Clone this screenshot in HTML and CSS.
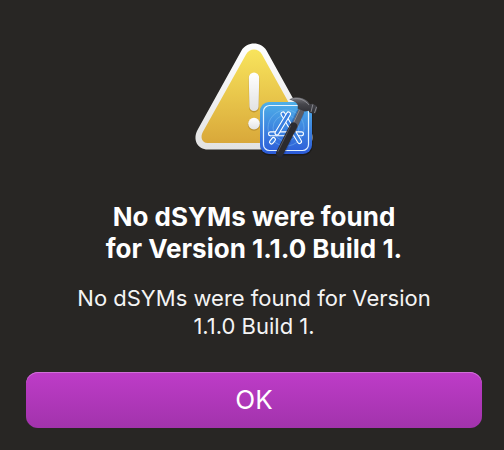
FILE: index.html
```html
<!DOCTYPE html>
<html lang="en">
<head>
    <meta charset="UTF-8">
    <meta name="viewport" content="width=device-width, initial-scale=1.0">
    <title>No dSYMs were found</title>
    <link rel="stylesheet" href="styles.css">
</head>
<body>

    <main class="alert" role="alertdialog" aria-labelledby="alertTitle" aria-describedby="alertText">
        <svg class="alert-icon" viewBox="190 36 128 128" aria-hidden="true">
            <defs>
                <linearGradient id="frame" x1="0" y1="0" x2="0" y2="1">
                    <stop offset="0" stop-color="#ffffff"/>
                    <stop offset="1" stop-color="#e2e2e2"/>
                </linearGradient>
                <linearGradient id="yellow" x1="0" y1="0" x2="0" y2="1">
                    <stop offset="0" stop-color="#f8e45c"/>
                    <stop offset="1" stop-color="#d9a83a"/>
                </linearGradient>
                <linearGradient id="blue" x1="0" y1="0" x2="0" y2="1">
                    <stop offset="0" stop-color="#4fb0e8"/>
                    <stop offset="1" stop-color="#2c5bd8"/>
                </linearGradient>
                <linearGradient id="metal" x1="0" y1="0" x2="0" y2="1">
                    <stop offset="0" stop-color="#77777d"/>
                    <stop offset="0.4" stop-color="#46464c"/>
                    <stop offset="1" stop-color="#2c2c31"/>
                </linearGradient>
            </defs>

            <!-- warning triangle -->
            <path fill="url(#frame)" d="M241.500 50.500C247 41.200 261 41.200 266.500 50.500L310.500 130C316 140 310 149.500 300 149.500H208C197 149.500 192.500 139 197.500 130Z"/>
            <path fill="url(#yellow)" d="M246 54.500C249.500 47.800 258.500 47.800 262 54.500L305 132C308 138 305 143 300 143H207.500C202 143 200 137 202.800 132Z"/>
            <path fill="#a87f25" opacity="0.6" d="M248.500 78.500a5.500 5.500 0 0 1 11 0l-.6 29a4.900 4.900 0 0 1-9.800 0Z"/>
            <circle cx="254" cy="124.600" r="6.200" fill="#a87f25" opacity="0.6"/>
            <path fill="url(#frame)" d="M248.800 77.800a5.200 5.200 0 0 1 10.400 0l-.6 28.600a4.600 4.600 0 0 1-9.200 0Z"/>
            <circle cx="254" cy="123.600" r="5.800" fill="url(#frame)"/>

            <!-- app badge -->
            <rect x="260" y="103" width="52.500" height="52.500" rx="9" fill="#000" opacity="0.3"/>
            <rect x="260" y="102" width="52" height="52" rx="9" fill="url(#blue)"/>
            <g fill="none" stroke="#8cc8f5" stroke-width="0.700" opacity="0.6">
                <circle cx="286" cy="128" r="18"/>
                <circle cx="286" cy="128" r="13"/>
            </g>
            <rect x="263.500" y="105.500" width="45" height="45" rx="6" fill="none" stroke="#e4f3ff" stroke-width="1.200"/>
            <g fill="none" stroke-linecap="round">
                <path stroke="#fff" stroke-width="5" d="M270.500 133.800H301.500"/>
                <path stroke="#3a7fe0" stroke-width="2.800" d="M270.500 133.800H301.500"/>
                <path stroke="#fff" stroke-width="5" d="M283 114L299.500 141.500"/>
                <path stroke="#3a80e1" stroke-width="2.800" d="M283 114L299.500 141.500"/>
                <path stroke="#fff" stroke-width="5" d="M288.500 114L277 133M273.500 139.500L271.500 142"/>
                <path stroke="#3a80e1" stroke-width="2.800" d="M288.500 114L277 133M273.500 139.500L271.500 142"/>
            </g>

            <!-- hammer -->
            <g stroke-linecap="round" fill="none">
                <path stroke="#0c2258" stroke-width="8" opacity="0.3" d="M280.500 154L300 113"/>
                <path stroke="#5c5c63" stroke-width="6" d="M293 130L302.500 108"/>
                <path stroke="#8d8d94" stroke-width="1" d="M292.500 125L299.500 110"/>
                <path stroke="#2b2b30" stroke-width="7.400" d="M279.800 153L293.500 126"/>
                <path stroke="#55555c" stroke-width="1" d="M278 151.500L290.500 126"/>
            </g>
            <path fill="url(#metal)" d="M289.200 99.400C295 96.300 303 97.100 307.500 101.300L310 104.200L312.500 103.700L317 106.200C317.600 109 316.500 112.500 314.300 114.200L309.500 112.500L308.500 110.700L305 111.500L297.500 108.500C299 104 296 101.500 289.200 99.400Z"/>
            <path fill="none" stroke="#9a9aa0" stroke-width="0.800" d="M292 99.200C299 97.500 304 99.500 309 104.800M312.800 104.500L311 112M316.500 107L314.500 113"/>
        </svg>

        <h1 class="alert-title" id="alertTitle">No dSYMs were found<br>for Version 1.1.0 Build 1.</h1>
        <p class="alert-text" id="alertText">No dSYMs were found for Version 1.1.0 Build 1.</p>
        <button type="button" class="btn-ok">OK</button>
    </main>

</body>
</html>
```
FILE: styles.css
```css
* {
    box-sizing: border-box;
}
body {
    margin: 0;
    background-color: #282624;
    color: #fff;
    font-family: Inter, "Liberation Sans", sans-serif;
}
.alert {
    display: flex;
    flex-direction: column;
    align-items: center;
    padding: 36px 22px 22px 26px;
    text-align: center;
}
.alert-icon {
    width: 128px;
    height: 128px;
}
.alert-title {
    margin: 37px 0 0;
    font-size: 26px;
    line-height: 32px;
    font-weight: 700;
}
.alert-text {
    max-width: 380px;
    margin: 19px 0 0;
    color: #f4f4f4;
    font-size: 22px;
    line-height: 28px;
}
.btn-ok {
    width: 100%;
    height: 56px;
    margin-top: 32px;
    padding: 0 0 2px;
    border: none;
    border-radius: 12px;
    background: linear-gradient(#be3cc8, #a233ac);
    box-shadow: inset 0 1px 0 #d070d8;
    color: #fff;
    font-family: inherit;
    font-size: 26px;
    cursor: pointer;
}
.btn-ok:active {
    background: linear-gradient(#a934b2, #8d2b96);
}
```
